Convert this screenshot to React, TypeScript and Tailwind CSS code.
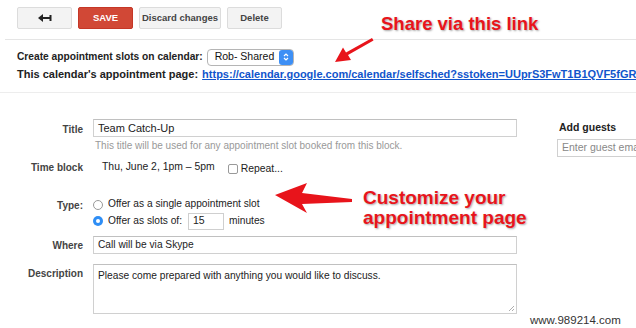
import React from "react";

const Btn = ({ children, className = "" }: { children: React.ReactNode; className?: string }) => (
  <div
    className={
      "h-[22px] flex items-center justify-center whitespace-nowrap rounded-[2px] border text-[9.5px] font-bold " +
      className
    }
  >
    {children}
  </div>
);

export default function App() {
  return (
    <div
      className="relative w-[636px] h-[328px] overflow-hidden bg-white text-[#222]"
      style={{ fontFamily: '"Liberation Sans", Arial, sans-serif' }}
    >
      {/* toolbar */}
      <div className="flex gap-[6px] pl-[17px] pt-[7px]">
        <Btn className="w-[55px] bg-[#f3f3f3] border-[#dcdcdc]">
          <svg width="14" height="10" viewBox="0 0 14 10">
            <path d="M0 5 L5 1 L5 4 L12 4 L12 6 L5 6 L5 9 Z" fill="#222" />
            <rect x="11.5" y="2" width="2" height="6" fill="#222" />
          </svg>
        </Btn>
        <Btn className="w-[55px] bg-[#d14836] border-[#c53727] text-white">SAVE</Btn>
        <Btn className="w-[82px] bg-[#f3f3f3] border-[#dcdcdc] text-[#444]">Discard changes</Btn>
        <Btn className="w-[55px] bg-[#f3f3f3] border-[#dcdcdc] text-[#444]">Delete</Btn>
      </div>
      <div className="ml-[5px] mt-[10px] border-t border-[#e5e5e5]" />

      {/* calendar settings */}
      <div className="pl-[17px] pt-[8px] font-bold text-[#222]">
        <div className="flex items-center h-[18px] text-[10.2px]">
          <span>Create appointment slots on calendar:</span>
          <div className="ml-[4px] w-[87px] h-[17px] rounded-[4px] border border-[#b5b5b5] bg-white flex items-center justify-between pl-[7px] font-normal text-[10.5px] text-[#111]">
            <span>Rob- Shared</span>
            <div className="w-[14px] h-[15px] rounded-[3px] bg-[#3d8ff5] flex items-center justify-center">
              <svg width="6" height="10" viewBox="0 0 6 10">
                <path d="M1 4 L3 2 L5 4" stroke="white" strokeWidth="1.2" fill="none" />
                <path d="M1 6 L3 8 L5 6" stroke="white" strokeWidth="1.2" fill="none" />
              </svg>
            </div>
          </div>
        </div>
        <div className="flex items-center h-[16px] whitespace-nowrap text-[11px]">
          <span>This calendar's appointment page:</span>
          <span className="ml-[4px] text-[#1155cc] underline">
            https://calendar.google.com/calendar/selfsched?sstoken=UUprS3FwT1B1QVF5fGRI
          </span>
        </div>
      </div>
      <div className="mt-[10px] border-t border-[#ededed]" />

      {/* form */}
      <div className="flex pt-[26px]">
        <div className="flex flex-col">
          {/* Title */}
          <div className="flex">
            <div className="w-[83px] text-right text-[10px] font-bold text-[#444] pt-[3px]">Title</div>
            <div className="ml-[10px]">
              <div className="w-[424px] h-[18px] border border-[#d0d0d0] border-t-[#c0c0c0] flex items-center pl-[4px] text-[11px] text-[#222]">
                Team Catch-Up
              </div>
              <div className="mt-[1px] pl-[2px] text-[10px] text-[#999]">
                This title will be used for any appointment slot booked from this block.
              </div>
            </div>
          </div>
          {/* Time block */}
          <div className="flex items-center mt-[5px] h-[18px]">
            <div className="w-[83px] text-right text-[10px] font-bold text-[#444]">Time block</div>
            <div className="ml-[19px] text-[10.4px] text-[#222]">Thu, June 2, 1pm – 5pm</div>
            <div className="ml-[13px] w-[10px] h-[10px] border border-[#999] rounded-[2px] bg-white mt-[3px]" />
            <div className="ml-[3px] text-[10.4px] text-[#222] mt-[3px]">Repeat...</div>
          </div>
          {/* Type */}
          <div className="flex mt-[20px]">
            <div className="w-[83px] text-right text-[10px] font-bold text-[#444] pt-[2px]">Type:</div>
            <div className="ml-[10px] flex flex-col">
              <div className="flex items-center h-[16px]">
                <div className="w-[10px] h-[10px] rounded-full border border-[#999] bg-white mt-[2px]" />
                <span className="ml-[5px] text-[10.2px]">Offer as a single appointment slot</span>
              </div>
              <div className="flex items-center h-[18px]">
                <div className="w-[10px] h-[10px] rounded-full bg-[#2f8ef5] flex items-center justify-center">
                  <div className="w-[4px] h-[4px] rounded-full bg-white" />
                </div>
                <span className="ml-[5px] text-[10.2px]">Offer as slots of:</span>
                <div className="ml-[6px] w-[36px] h-[17px] border border-[#cfcfcf] flex items-center pl-[4px] text-[10.5px]">
                  15
                </div>
                <span className="ml-[5px] text-[10.2px]">minutes</span>
              </div>
            </div>
          </div>
          {/* Where */}
          <div className="flex items-center mt-[6px]">
            <div className="w-[83px] text-right text-[10px] font-bold text-[#444]">Where</div>
            <div className="ml-[10px] w-[424px] h-[18px] border border-[#d0d0d0] border-t-[#c0c0c0] flex items-center pl-[4px] text-[10.2px]">
              Call will be via Skype
            </div>
          </div>
          {/* Description */}
          <div className="flex mt-[10px]">
            <div className="w-[83px] text-right text-[10px] font-bold text-[#444] pt-[2px]">Description</div>
            <div className="relative ml-[10px] w-[424px] h-[50px] border border-[#d0d0d0] border-t-[#c0c0c0] pl-[4px] pt-[3px] text-[10.2px]">
              Please come prepared with anything you would like to discuss.
              <svg className="absolute right-[1px] bottom-[1px]" width="7" height="7" viewBox="0 0 7 7">
                <path d="M1 6 L6 1 M4 6 L6 4" stroke="#999" strokeWidth="0.8" />
              </svg>
            </div>
          </div>
        </div>
        {/* Add guests */}
        <div className="ml-[40px] flex flex-col">
          <div className="pl-[2px] text-[10.5px] font-bold text-[#222] pt-[1px]">Add guests</div>
          <div className="mt-[3px] w-[90px] h-[18px] border border-[#d0d0d0] flex items-center pl-[4px] text-[10.5px] text-[#888] whitespace-nowrap overflow-hidden">
            Enter guest emai
          </div>
        </div>
      </div>

      {/* watermark */}
      <div className="absolute left-[530px] top-[312px] text-[11.5px] text-[#333]">www.989214.com</div>

      {/* annotations */}
      <div
        className="absolute left-[381px] top-[10px] text-[18.5px] font-bold text-[#e8141b] whitespace-nowrap"
        style={{ textShadow: "1px 1px 2px rgba(0,0,0,0.35)" }}
      >
        Share via this link
      </div>
      <svg className="absolute left-[330px] top-[34px]" width="46" height="32" viewBox="0 0 46 32">
        <path d="M42 4 L43.5 6.5 L18 21 L21 26 L5 28 L13 13.5 L16 18.5 Z" fill="#e8141b" />
      </svg>

      <div
        className="absolute left-[363px] top-[188px] text-[19px] leading-[20px] font-bold text-[#e8141b] whitespace-nowrap"
        style={{ textShadow: "1px 1px 2px rgba(0,0,0,0.35)" }}
      >
        Customize your
        <br />
        appointment page
      </div>
      <svg className="absolute left-[270px] top-[180px]" width="90" height="36" viewBox="0 0 90 36">
        <path d="M5 15 L37 3 L32 13 L82 19 L82 22 L32 24 L37 33 Z" fill="#e8141b" />
      </svg>
    </div>
  );
}
